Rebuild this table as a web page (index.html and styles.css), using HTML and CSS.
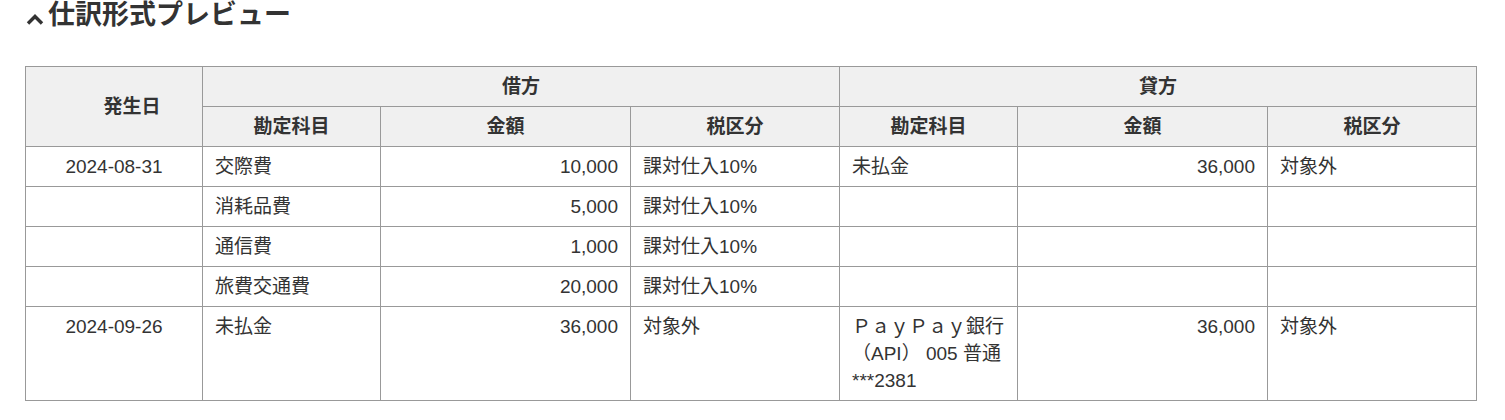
FILE: index.html
```html
<!DOCTYPE html>
<html lang="ja">
<head>
<meta charset="utf-8">
<title>仕訳形式プレビュー</title>
<link rel="stylesheet" href="styles.css">
</head>
<body>
<div class="page">
  <h2 class="title">
    <svg class="chev" width="18" height="12" viewBox="0 0 18 12"><path d="M2 10.5 L9 3.5 L16 10.5" fill="none" stroke="#333" stroke-width="3.4" stroke-linejoin="miter"/></svg>
    <span>仕訳形式プレビュー</span>
  </h2>
  <table class="jt">
    <colgroup>
      <col class="c-date"><col class="c-acct"><col class="c-amt"><col class="c-tax">
      <col class="c-acct"><col class="c-amt"><col class="c-tax">
    </colgroup>
    <thead>
      <tr>
        <th rowspan="2" class="th-date">発生日</th>
        <th colspan="3">借方</th>
        <th colspan="3">貸方</th>
      </tr>
      <tr>
        <th>勘定科目</th><th>金額</th><th>税区分</th>
        <th>勘定科目</th><th>金額</th><th>税区分</th>
      </tr>
    </thead>
    <tbody>
      <tr>
        <td class="date">2024-08-31</td><td>交際費</td><td class="num">10,000</td><td>課対仕入10%</td>
        <td>未払金</td><td class="num">36,000</td><td>対象外</td>
      </tr>
      <tr>
        <td class="date"></td><td>消耗品費</td><td class="num">5,000</td><td>課対仕入10%</td>
        <td></td><td class="num"></td><td></td>
      </tr>
      <tr>
        <td class="date"></td><td>通信費</td><td class="num">1,000</td><td>課対仕入10%</td>
        <td></td><td class="num"></td><td></td>
      </tr>
      <tr>
        <td class="date"></td><td>旅費交通費</td><td class="num">20,000</td><td>課対仕入10%</td>
        <td></td><td class="num"></td><td></td>
      </tr>
      <tr>
        <td class="date">2024-09-26</td><td>未払金</td><td class="num">36,000</td><td>対象外</td>
        <td>ＰａｙＰａｙ銀行（API） 005 普通 ***2381</td><td class="num">36,000</td><td>対象外</td>
      </tr>
    </tbody>
  </table>
</div>
</body>
</html>
```

FILE: styles.css
```css
html, body {
  margin: 0;
  padding: 0;
  background: #fff;
}
body {
  font-family: "Liberation Sans", Arial, "Noto Sans CJK JP", sans-serif;
  color: #333;
}
.page {
  padding: 0 28px 0 25px;
}
.title {
  display: flex;
  align-items: center;
  gap: 4px;
  margin: 0;
  padding-top: 0;
  height: 30px;
  font-size: 27px;
  line-height: 30px;
  font-weight: bold;
  color: #333;
}
.chev {
  margin-left: 1px;
  margin-top: 7px;
  flex: none;
}
.jt {
  margin-top: 36px;
  width: 1452px;
  table-layout: fixed;
  border-collapse: collapse;
  font-size: 19px;
  line-height: 27px;
}
.c-date { width: 177px; }
.c-acct { width: 178px; }
.c-amt { width: 250px; }
.c-tax { width: 209px; }
.jt th, .jt td {
  border: 1px solid #999;
  padding: 6px 12px;
  vertical-align: top;
  text-align: left;
}
.jt th {
  background: #f0f0f0;
  font-weight: bold;
  text-align: center;
  vertical-align: middle;
}
.jt th.th-date {
  padding-left: 48px;
}
.jt td.date {
  text-align: center;
}
.jt td.num {
  text-align: right;
}
```
